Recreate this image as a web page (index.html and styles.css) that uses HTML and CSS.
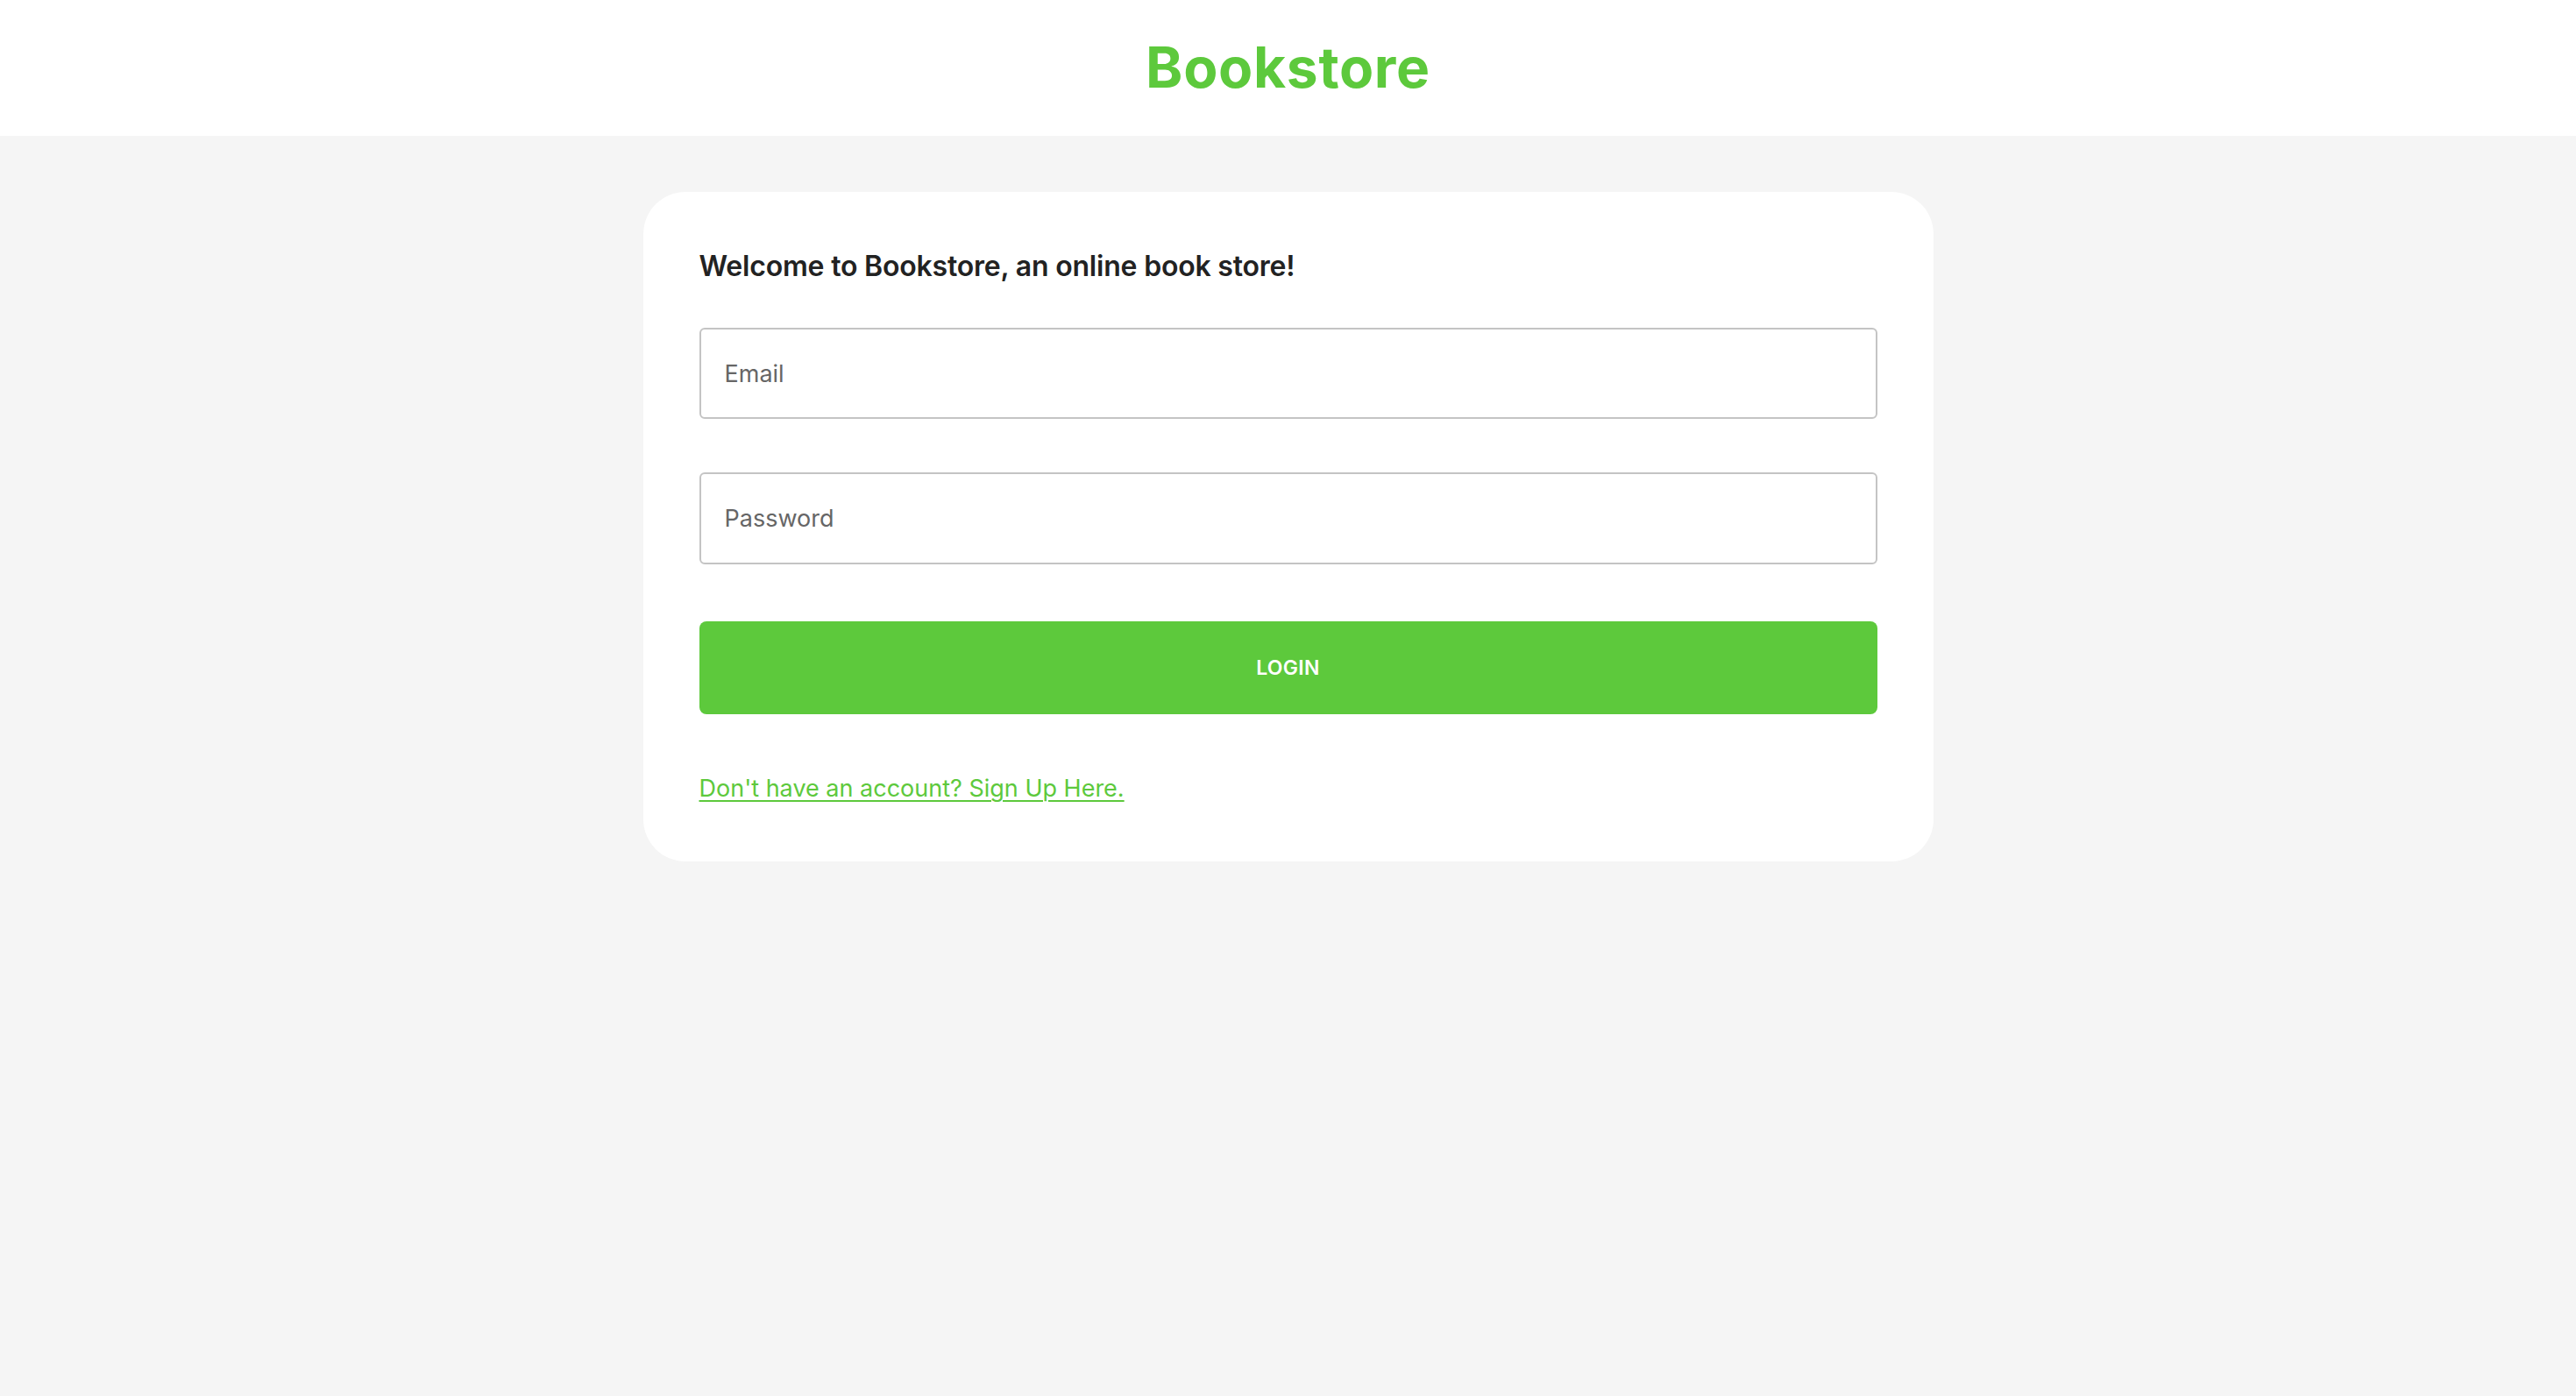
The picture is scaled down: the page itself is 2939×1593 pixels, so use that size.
FILE: index.html
```html
<!DOCTYPE html>
<html lang="en">
<head>
<meta charset="utf-8">
<title>Bookstore</title>
<link rel="stylesheet" href="styles.css">
</head>
<body>
<header class="topbar">
  <h1 class="brand">Bookstore</h1>
</header>
<main class="main">
  <section class="card">
    <h2 class="welcome">Welcome to Bookstore, an online book store!</h2>
    <form class="form">
      <input class="field" type="email" placeholder="Email">
      <input class="field field-password" type="password" placeholder="Password">
      <button class="login" type="button">LOGIN</button>
    </form>
    <a class="signup" href="#">Don't have an account? Sign Up Here.</a>
  </section>
</main>
</body>
</html>
```

FILE: styles.css
```css
* { box-sizing: border-box; }
html, body {
  margin: 0;
  padding: 0;
  background: #f5f5f5;
  font-family: Inter, "Open Sans", Roboto, sans-serif;
  min-height: 100%;
}
.topbar {
  height: 155px;
  background: #ffffff;
  display: flex;
  align-items: center;
  justify-content: center;
}
.brand {
  margin: 0;
  font-size: 64px;
  line-height: 1;
  font-weight: 700;
  color: #5dc93c;
  letter-spacing: 0.7px;
  padding-bottom: 2px;
}
.main {
  display: flex;
  justify-content: center;
  padding-top: 64px;
}
.card {
  width: 1472px;
  background: #ffffff;
  border-radius: 48px;
  padding: 65px 64px 63px 64px;
  display: flex;
  flex-direction: column;
  align-items: flex-start;
}
.welcome {
  margin: 0;
  font-size: 32px;
  line-height: 40px;
  font-weight: 600;
  color: #222222;
  letter-spacing: -0.2px;
}
.form {
  width: 100%;
  display: flex;
  flex-direction: column;
  margin-top: 50px;
}
.field {
  width: 100%;
  height: 104px;
  border: 2px solid #c4c4c4;
  border-radius: 6px;
  padding: 0 27px;
  font-family: inherit;
  font-size: 27px;
  color: #333;
  background: #fff;
  outline: none;
}
.field::placeholder { color: #666666; }
.field-password {
  margin-top: 61px;
  height: 105px;
}
.login {
  margin-top: 65px;
  width: 100%;
  height: 106px;
  border: none;
  border-radius: 8px;
  background: #5dc93c;
  color: #ffffff;
  font-family: inherit;
  font-size: 23px;
  font-weight: 600;
  letter-spacing: 0.3px;
  cursor: pointer;
}
.signup {
  margin-top: 65px;
  font-size: 27px;
  line-height: 40px;
  color: #5dc93c;
  text-decoration: underline;
  text-decoration-thickness: 2px;
  text-underline-offset: 4px;
}
```
